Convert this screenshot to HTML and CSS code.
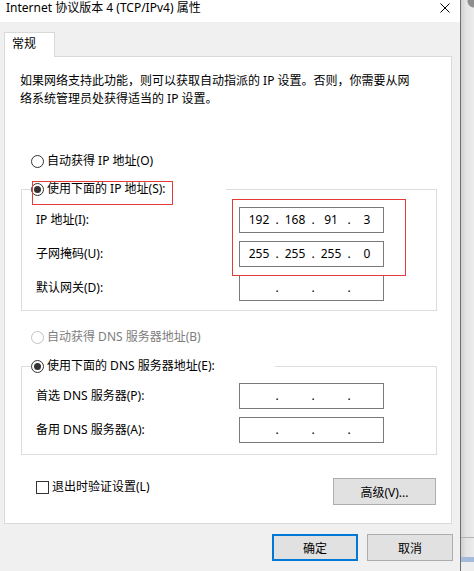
FILE: index.html
```html
<!DOCTYPE html>
<html lang="zh-CN">
<head>
<meta charset="utf-8">
<title>Internet 协议版本 4 (TCP/IPv4) 属性</title>
<link rel="stylesheet" href="styles.css">
</head>
<body>
<div class="screen">
  <div class="window">
    <div class="titlebar">
      <span class="title">Internet 协议版本 4 (TCP/IPv4) 属性</span>
      <svg class="close" width="10" height="10" viewBox="0 0 10 10"><path d="M0.5 0.5 L9.5 9.5 M9.5 0.5 L0.5 9.5" stroke="#000" stroke-width="1" fill="none"/></svg>
    </div>
    <div class="body">
      <div class="tabs"><div class="tab">常规</div></div>
      <div class="panel">
        <p class="desc">如果网络支持此功能，则可以获取自动指派的 IP 设置。否则，你需要从网<br>络系统管理员处获得适当的 IP 设置。</p>

        <div class="radio top-radio"><span class="circle"></span><span>自动获得 IP 地址(O)</span></div>

        <fieldset class="group g-ip">
          <legend><span class="radio checked"><span class="circle"></span><span>使用下面的 IP 地址(S):</span></span><span class="mark mark-legend"></span></legend>
          <div class="rows rows-ip">
            <div class="row"><span class="lbl">IP 地址(I):</span>
              <div class="ipbox"><span class="seg">192</span><span class="dot">.</span><span class="seg">168</span><span class="dot">.</span><span class="seg">91</span><span class="dot">.</span><span class="seg">3</span></div></div>
            <div class="row"><span class="lbl">子网掩码(U):</span>
              <div class="ipbox"><span class="seg">255</span><span class="dot">.</span><span class="seg">255</span><span class="dot">.</span><span class="seg">255</span><span class="dot">.</span><span class="seg">0</span></div></div>
            <div class="row"><span class="lbl">默认网关(D):</span>
              <div class="ipbox"><span class="seg"></span><span class="dot">.</span><span class="seg"></span><span class="dot">.</span><span class="seg"></span><span class="dot">.</span><span class="seg"></span></div></div>
            <span class="mark mark-ip"></span>
          </div>
        </fieldset>

        <div class="radio disabled mid-radio"><span class="circle"></span><span>自动获得 DNS 服务器地址(B)</span></div>

        <fieldset class="group g-dns">
          <legend><span class="radio checked"><span class="circle"></span><span>使用下面的 DNS 服务器地址(E):</span></span></legend>
          <div class="rows rows-dns">
            <div class="row"><span class="lbl">首选 DNS 服务器(P):</span>
              <div class="ipbox"><span class="seg"></span><span class="dot">.</span><span class="seg"></span><span class="dot">.</span><span class="seg"></span><span class="dot">.</span><span class="seg"></span></div></div>
            <div class="row"><span class="lbl">备用 DNS 服务器(A):</span>
              <div class="ipbox"><span class="seg"></span><span class="dot">.</span><span class="seg"></span><span class="dot">.</span><span class="seg"></span><span class="dot">.</span><span class="seg"></span></div></div>
          </div>
        </fieldset>

        <div class="footer-row">
          <div class="check"><span class="box"></span><span>退出时验证设置(L)</span></div>
          <button class="btn btn-adv" type="button">高级(V)...</button>
        </div>
      </div>
      <div class="actions">
        <button class="btn btn-primary" type="button">确定</button>
        <button class="btn" type="button">取消</button>
      </div>
    </div>
  </div>
  <div class="strip"></div>
</div>
</body>
</html>
```

FILE: styles.css
```css
html, body {
  margin: 0;
  padding: 0;
}
body {
  background: #f0f0f0;
  font-family: "Noto Sans", "Noto Sans CJK SC", sans-serif;
  font-size: 12px;
  line-height: 18px;
  color: #000;
}
.screen {
  display: flex;
  width: 474px;
  height: 571px;
  overflow: hidden;
}
.window {
  width: 460px;
  flex: none;
  display: flex;
  flex-direction: column;
  background: #f0f0f0;
}
.titlebar {
  height: 22px;
  background: #fff;
  display: flex;
  justify-content: space-between;
  align-items: flex-start;
  padding: 0 10px 0 6px;
  box-sizing: border-box;
}
.title {
  line-height: 16px;
  white-space: nowrap;
}
.close {
  display: block;
  margin-top: 3px;
}
.body {
  padding: 10px 8px 0 4px;
}
.tabs {
  display: flex;
}
.tab {
  width: 51px;
  height: 25px;
  box-sizing: border-box;
  border: 1px solid #d9d9d9;
  border-bottom: none;
  background: #fff;
  padding-left: 7px;
  line-height: 22px;
  margin-bottom: -1px;
  position: relative;
  z-index: 1;
}
.panel {
  border: 1px solid #d9d9d9;
  background: #fff;
  padding-bottom: 18px;
}
.desc {
  margin: 15px 0 0 15px;
  white-space: nowrap;
  line-height: 18px;
}
.radio {
  display: flex;
  align-items: center;
  gap: 3px;
  height: 18px;
  white-space: nowrap;
}
.radio .circle {
  width: 13px;
  height: 13px;
  box-sizing: border-box;
  border: 1px solid #333;
  border-radius: 50%;
  background: #fff;
  display: flex;
  align-items: center;
  justify-content: center;
  flex: none;
}
.radio.checked .circle::after {
  content: "";
  width: 7px;
  height: 7px;
  border-radius: 50%;
  background: #333;
}
.radio.disabled {
  color: #7d7d7d;
}
.radio.disabled .circle {
  border-color: #c2c2c2;
}
.top-radio {
  margin: 44px 0 0 26px;
}
.mid-radio {
  margin: 17px 0 0 26px;
}
.group {
  margin: 10px 14px 0 16px;
  padding: 0;
  border: 1px solid #dcdcdc;
  min-width: 0;
}
.g-dns {
  margin-top: 11px;
}
.group legend {
  padding: 0 60px 0 0;
  margin-left: 9px;
  height: 18px;
  line-height: 18px;
  position: relative;
}
.rows {
  display: flex;
  flex-direction: column;
  gap: 8px;
  padding: 9px 0 9px 14px;
  position: relative;
}
.rows-dns {
  padding-top: 8px;
  padding-bottom: 11px;
}
.row {
  display: flex;
  align-items: center;
  height: 26px;
}
.lbl {
  width: 203px;
  flex: none;
  white-space: nowrap;
}
.ipbox {
  width: 145px;
  height: 26px;
  box-sizing: border-box;
  border: 1px solid #7a7a7a;
  background: #fff;
  display: flex;
  align-items: center;
  padding-left: 3px;
}
.seg {
  width: 32px;
  text-align: center;
  flex: none;
}
.dot {
  width: 4px;
  text-align: center;
  flex: none;
}
.mark {
  position: absolute;
  border: 1px solid #e53a3a;
  box-sizing: border-box;
  pointer-events: none;
}
.mark-legend {
  left: 1px;
  top: 1px;
  width: 141px;
  height: 24px;
}
.mark-ip {
  left: 210px;
  top: 1px;
  width: 174px;
  height: 77px;
}
.footer-row {
  display: flex;
  justify-content: space-between;
  align-items: flex-start;
  margin-top: 23px;
  padding: 0 15px 0 31px;
}
.check {
  display: flex;
  align-items: center;
  gap: 3px;
  height: 18px;
  white-space: nowrap;
}
.check .box {
  width: 13px;
  height: 13px;
  box-sizing: border-box;
  border: 1px solid #333;
  background: #fff;
  flex: none;
}
.btn {
  font-family: "Noto Sans", "Noto Sans CJK SC", sans-serif;
  font-size: 12px;
  color: #000;
  background: #e1e1e1;
  border: 1px solid #adadad;
  width: 86px;
  height: 27px;
  padding: 0;
  margin: 0;
  box-sizing: border-box;
}
.btn-adv {
  width: 103px;
}
.btn-primary {
  border: 2px solid #0078d7;
}
.actions {
  display: flex;
  justify-content: flex-end;
  gap: 9px;
  margin: 10px -1px 0 0;
}
.strip {
  flex: 1;
  border-left: 1px solid #6f6f6f;
  background:
    radial-gradient(circle at 13px 1px, #8e8e8e 0 6px, transparent 7px),
    linear-gradient(to bottom, transparent 0 537px, #b4b4b4 537px 538px, transparent 538px),
    linear-gradient(to bottom, transparent 0 557px, #a5bbdb 557px 562px, #eeeeee 562px),
    linear-gradient(to right, #cfcfcf, #e4e4e4 5px, #ebebeb);
}
```
